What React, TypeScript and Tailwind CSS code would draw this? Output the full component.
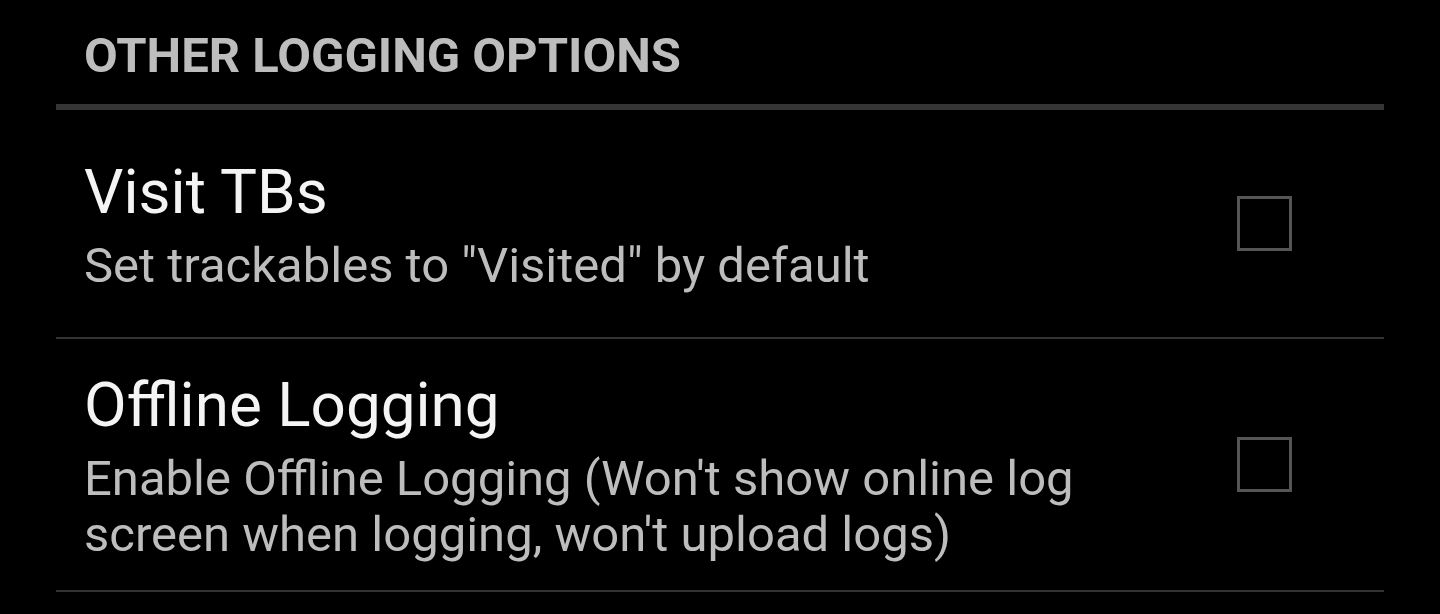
const items = [
  {
    title: 'Visit TBs',
    summary: 'Set trackables to "Visited" by default'
  },
  {
    title: 'Offline Logging',
    summary: "Enable Offline Logging (Won't show online log screen when logging, won't upload logs)"
  }
]

const Checkbox = () => (
  <div className="h-[55px] w-[55px] shrink-0 border-[3px] border-[#555555]" />
)

export default function App() {
  return (
    <div
      className="h-[614px] w-[1440px] overflow-hidden bg-black px-14"
      style={{ fontFamily: 'Roboto, "Noto Sans", sans-serif' }}
    >
      <div className="pl-[28px] pt-[30px] pb-[22px] text-[49px] font-bold leading-[52px] text-[#bdbdbd]">
        OTHER LOGGING OPTIONS
      </div>
      <div className="h-[6px] bg-[#353535]" />
      {items.map(item => (
        <div key={item.title} className="border-b-2 border-[#323232]">
          <div className="flex min-h-[227px] items-center justify-between pl-[28px] pr-[92px] pt-[26px] pb-[27px]">
            <div className="max-w-[1040px] pt-[4px]">
              <div className="text-[62px] leading-[72px] text-[#f4f4f4]">{item.title}</div>
              <div className="mt-[10px] text-[49px] leading-[56px] text-[#bdbdbd]">{item.summary}</div>
            </div>
            <Checkbox />
          </div>
        </div>
      ))}
    </div>
  )
}
